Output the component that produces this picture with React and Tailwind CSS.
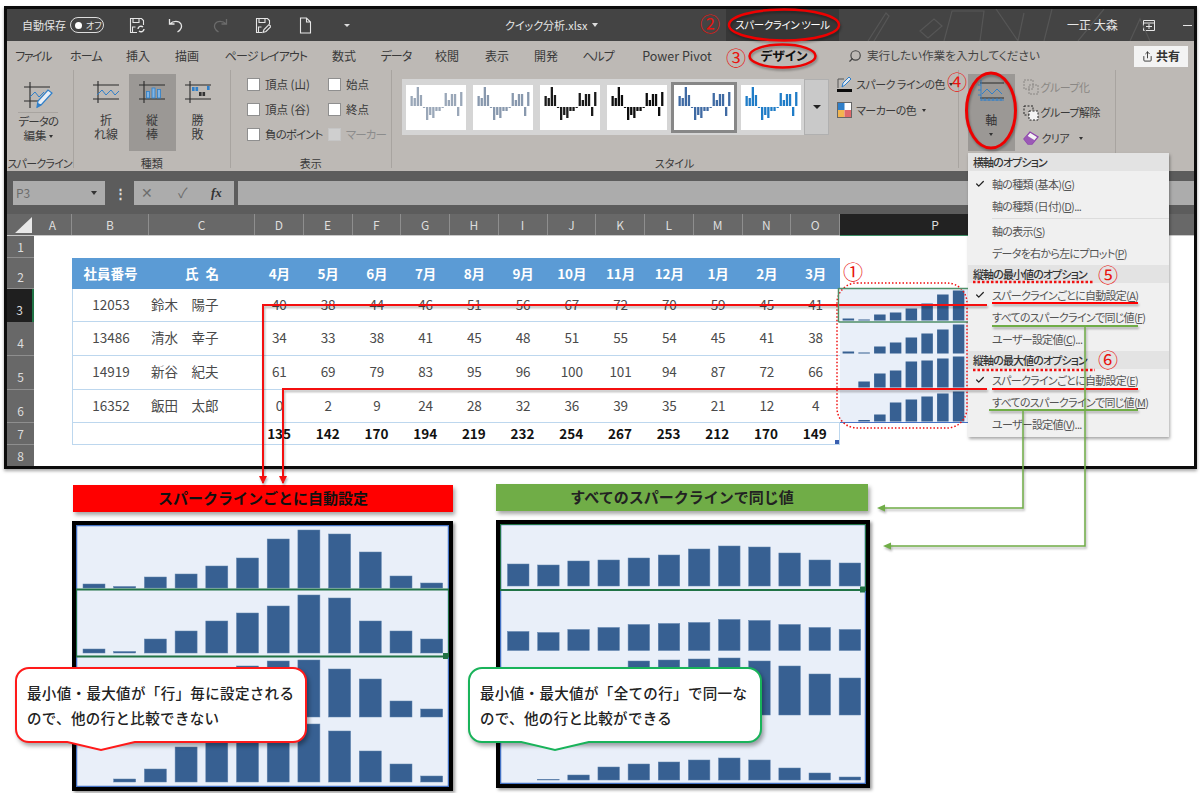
import React from 'react';
import { Check, Search, Share } from 'lucide-react';

const cols = ['D', 'E', 'F', 'G', 'H', 'I', 'J', 'K', 'L', 'M', 'N', 'O'];
const months = ['4月', '5月', '6月', '7月', '8月', '9月', '10月', '11月', '12月', '1月', '2月', '3月'];
const rows = [
  { id: 12053, name: '鈴木　陽子', h: 'h-[33px]', vals: [40, 38, 44, 46, 51, 56, 67, 72, 70, 59, 45, 41], spark: [2, 1, 6, 8, 12, 17, 26, 30] },
  { id: 13486, name: '清水　幸子', h: 'h-[34px]', vals: [34, 33, 38, 41, 45, 48, 51, 55, 54, 45, 41, 38], spark: [2, 1, 7, 11, 16, 20, 24, 29] },
  { id: 14919, name: '新谷　紀夫', h: 'h-[34px]', vals: [61, 69, 79, 83, 95, 96, 100, 101, 94, 87, 72, 66], spark: [0, 6, 14, 17, 26, 27, 29, 31] },
  { id: 16352, name: '飯田　太郎', h: 'h-[33px]', vals: [0, 2, 9, 24, 28, 32, 36, 39, 35, 21, 12, 4], spark: [0, 1.5, 7, 19, 22, 25, 28, 30] },
];
const totals = [135, 142, 170, 194, 219, 232, 254, 267, 253, 212, 170, 149];

const autoChart = [
  { base: 63, bars: [4, 1.5, 11, 14, 22, 30, 49, 58, 54, 36, 12, 5] },
  { base: 128, bars: [4, 1.5, 14, 22, 32, 40, 47, 58, 55, 32, 22, 14] },
  { base: 192, bars: [2, 12, 25, 31, 47, 51, 56, 57, 48, 38, 16, 8] },
  { base: 257, bars: [0, 3, 13, 35, 41, 47, 53, 58, 51, 31, 18, 6] },
];
const sameChart = [
  { base: 62, bars: [22, 21, 25, 26, 28, 31, 37, 40, 39, 33, 26, 23] },
  { base: 126.5, bars: [19, 18, 21, 23, 26, 27, 28, 31, 30, 26, 23, 21] },
  { base: 191, bars: [34, 39, 45, 47, 54, 55, 56, 57, 54, 49, 41, 37] },
  { base: 256, bars: [0, 0.7, 5, 13, 16, 18, 20, 22, 20, 12, 7, 3] },
];

function Spark({ bars }) {
  return (
    <svg width="128" height="100%" className="block h-full">
      {bars.map((h, i) => (
        <rect key={i} x={2.6 + i * 15.75} y={31.5 - h} width="11.5" height={h} fill="#376092" />
      ))}
    </svg>
  );
}

function BigChart({ data, step, barW, startX, width, height, children }) {
  return (
    <svg width={width} height={height} className="block">
      {data.map((row, r) =>
        row.bars.map((h, i) => (
          <rect key={r + '-' + i} x={startX + i * step} y={row.base - h} width={barW} height={h} fill="#376092" stroke="#5f82ad" strokeWidth="0.5" />
        ))
      )}
      {children}
    </svg>
  );
}

function GalleryIcon({ color }) {
  const up = [10, 8, 19, 11, 0, 0, 0, 0, 0, 0, 0, 13, 6, 12, 12, 0, 14];
  const down = [0, 0, 0, 0, 1, 13, 8, 11, 4, 4, 1, 0, 0, 0, 0, 9, 0];
  return (
    <svg width="60" height="45" className="block">
      {up.map((h, i) => (
        <rect key={i} x={4.5 + i * 3.1} y={21 - h} width="2.3" height={h} fill={color} />
      ))}
      {down.map((h, i) => (
        <rect key={'d' + i} x={4.5 + i * 3.1} y={22} width="2.3" height={h} fill={color} />
      ))}
    </svg>
  );
}

function TypeIcon({ kind }) {
  return (
    <svg width="28" height="24" viewBox="0 0 28 24" fill="none" className="block">
      <path d="M1 5h26M1 19h26M6 1v22" stroke="#2b2b2b" strokeWidth="1.1" />
      {kind === 'line' && <path d="M5 15l5-5 4 5 5-5 4 5 4-4" stroke="#2f7fc9" strokeWidth="1" />}
      {kind === 'bar' && (
        <g fill="#7fb4e6" stroke="#2f7fc9" strokeWidth="0.8">
          <rect x="8.5" y="11.5" width="3" height="6.5" />
          <rect x="14" y="8" width="3" height="10" />
          <rect x="19.5" y="9.5" width="3" height="8.5" />
        </g>
      )}
      {kind === 'win' && (
        <g strokeWidth="0.5">
          <rect x="8" y="7" width="2.6" height="4" fill="#2f7fc9" />
          <rect x="11.5" y="7" width="2.6" height="4" fill="#2f7fc9" />
          <rect x="15" y="12" width="2.6" height="4" fill="#333" />
          <rect x="18.5" y="12" width="2.6" height="4" fill="#333" />
          <rect x="23" y="6" width="2.6" height="4" fill="#2f7fc9" />
        </g>
      )}
    </svg>
  );
}

function TypeButton({ kind, top, bottom, width, active }) {
  return (
    <div className={`flex h-[77px] flex-col items-center pt-[6px] ${width} ${active ? 'bg-[#9b9895]' : ''}`}>
      <TypeIcon kind={kind} />
      <div className="mt-[9px] text-center text-[12px] leading-[14px] text-[#3a3a3a]">
        <div>{top}</div>
        <div>{bottom}</div>
      </div>
    </div>
  );
}

function Caret({ className = '' }) {
  return <span className={`inline-block h-0 w-0 border-x-[2.5px] border-t-[3px] border-x-transparent border-t-[#333] align-middle ${className}`} />;
}

function Box({ label, disabled, tight }) {
  return (
    <div className="flex h-[25px] items-center">
      <span className={`h-[13px] w-[13px] shrink-0 border ${disabled ? 'border-[#c5c5c5] bg-[#cfcfcf]' : 'border-[#8f8f8f] bg-white'}`} />
      <span className={`ml-[5px] whitespace-nowrap text-[11.5px] ${tight ? 'tracking-[-0.9px]' : ''} ${disabled ? 'text-[#8c8c8c]' : 'text-[#3a3a3a]'}`}>{label}</span>
    </div>
  );
}

function GroupLabel({ children, className = '' }) {
  return <div className={`absolute inset-x-0 -bottom-[3px] h-[16px] whitespace-nowrap text-center text-[11px] leading-[16px] text-[#3a3a3a] ${className}`}>{children}</div>;
}

function MenuHead({ children }) {
  return <div className="flex h-[18px] items-center bg-[#e3e3e3] pl-[5px] text-[11px] font-medium tracking-[-0.9px] text-[#333]">{children}</div>;
}

function MenuItem({ children, checked }) {
  return (
    <div className="relative flex h-[22px] items-center whitespace-nowrap pl-[24px] text-[11px] tracking-[-0.7px] text-[#555]">
      {checked && <Check size={10} strokeWidth={3} className="absolute left-[7px] top-[6px] text-[#222]" />}
      <span>{children}</span>
    </div>
  );
}

function Circled({ children, className }) {
  return <span className={`absolute text-[20px] leading-none text-[#e8140f] ${className}`}>{children}</span>;
}

function Callout({ color, tail, className, children }) {
  return (
    <div className={`absolute top-[667px] h-[76px] whitespace-nowrap rounded-[14px] border-2 bg-white px-[10px] pt-[11px] text-[14.5px] font-medium leading-[25px] tracking-[0.35px] text-[#222] shadow-[2px_3px_4px_rgba(0,0,0,0.35)] [font-feature-settings:normal] ${className}`}>
      {children}
      <svg width="80" height="11" className={`absolute top-[72px] ${tail}`}>
        <path d="M0 0L38 9L76 0" fill="#fff" stroke={color} strokeWidth="2" />
      </svg>
    </div>
  );
}

export default function App() {
  return (
    <div className="relative h-[793px] w-[1200px] overflow-hidden bg-white font-['Noto_Sans_CJK_JP','Noto_Sans',sans-serif] [font-feature-settings:'palt']">
      {/* excel window */}
      <div className="ml-[4px] mt-[6px] w-[1193px] border-[3px] border-[#0c0c0c] shadow-[0_2px_3px_rgba(0,0,0,0.35)]">
        {/* title bar */}
        <div className="relative flex h-[32px] items-center overflow-hidden bg-[#444444] pl-[15px] text-[11px] text-[#e6e6e6]">
          <svg width="300" height="32" className="absolute left-[853px] top-0" fill="none" stroke="#565656" strokeWidth="1.2">
            <path d="M8 32L26 4l3 3L14 32M60 22l14-12 8 7-14 12zM84 32l8-30h32l-4 30M136 0l22 32M164 4l-6 28M192 0l-8 32M218 32l26-32M270 32l10-22 10 22" />
          </svg>
          <span className="w-[44px] whitespace-nowrap">自動保存</span>
          <div className="ml-[4px] flex h-[16px] w-[34px] items-center rounded-full border border-[#ddd] pl-[4px]">
            <span className="h-[7px] w-[7px] rounded-full bg-white" />
            <span className="ml-[4px] text-[9px] leading-none">オフ</span>
          </div>
          <svg width="16" height="17" viewBox="0 0 16 17" fill="none" stroke="#e6e6e6" strokeWidth="1.1" className="ml-[25px] shrink-0">
            <path d="M8 15.5H1.5v-14h11l2 2V8M4 1.5v4h6v-4M3.5 15v-5h3" />
            <path d="M9 12a3 3 0 0 1 5-2M15 12a3 3 0 0 1-5 2" strokeWidth="1.4" />
          </svg>
          <svg width="16" height="17" viewBox="0 0 16 17" fill="none" stroke="#e6e6e6" strokeWidth="1.3" className="ml-[23px] shrink-0">
            <path d="M1.5 2v5h5M2 7c3-3.5 9-3.5 11 0 1.5 3-.5 6-3.5 8" />
          </svg>
          <svg width="16" height="17" viewBox="0 0 16 17" fill="none" stroke="#6b6b6b" strokeWidth="1.3" className="ml-[28px] shrink-0">
            <path d="M14.5 2v5h-5M14 7c-3-3.5-9-3.5-11 0-1.5 3 .5 6 3.5 8" />
          </svg>
          <svg width="16" height="17" viewBox="0 0 16 17" fill="none" stroke="#e6e6e6" strokeWidth="1.1" className="ml-[27px] shrink-0">
            <path d="M7 15.5H1.5v-14h11l2 2V7M4 1.5v4h6v-4M3.5 15v-5h3" />
            <path d="M8 15.5l1-3 5-5 2 2-5 5z" />
          </svg>
          <svg width="13" height="17" viewBox="0 0 13 17" fill="none" stroke="#e6e6e6" strokeWidth="1.1" className="ml-[28px] shrink-0">
            <path d="M1.5 1h6l4 4v11h-10zM7.5 1v4h4" />
          </svg>
          <span className="ml-[32px] h-0 w-0 shrink-0 border-x-[3px] border-t-[3px] border-x-transparent border-t-[#ddd]" />
          <span className="ml-[155px] flex w-[88px] items-center whitespace-nowrap text-[11px]">
            クイック分析.xlsx
            <span className="ml-[5px] h-0 w-0 border-x-[3.5px] border-t-[4px] border-x-transparent border-t-[#ddd]" />
          </span>
          <div className="ml-[133px] flex h-full w-[113px] shrink-0 items-center justify-center whitespace-nowrap bg-[#373737] text-[10.5px] tracking-[-0.4px] text-white">スパークライン ツール</div>
          <span className="ml-[228px] w-[47px] whitespace-nowrap text-[12px]">一正 大森</span>
          <svg width="12" height="11" viewBox="0 0 12 11" fill="none" stroke="#e6e6e6" className="ml-[29px] shrink-0">
            <path d="M.5.5h11v10H.5zM.5 3h11M3 6.500h6M6 4v5" />
          </svg>
          <span className="ml-[28px] h-px w-[9px] bg-[#e6e6e6]" />
        </div>

        {/* tabs */}
        <div className="flex h-[29px] items-center bg-[#bdb9b5] pt-[1px] text-center text-[12px] text-[#3a3a3a]">
          <span className="w-[52px] tracking-[-1.5px]">ファイル</span>
          <span className="w-[54px] tracking-[-0.8px]">ホーム</span>
          <span className="w-[50px]">挿入</span>
          <span className="w-[48px]">描画</span>
          <span className="w-[110px] tracking-[-0.9px]">ページ レイアウト</span>
          <span className="w-[46px]">数式</span>
          <span className="w-[58px] tracking-[-1px]">データ</span>
          <span className="w-[44px]">校閲</span>
          <span className="w-[56px]">表示</span>
          <span className="w-[42px]">開発</span>
          <span className="w-[62px] tracking-[-1px]">ヘルプ</span>
          <span className="w-[96px] text-[12.5px]">Power Pivot</span>
          <span className="w-[118px] text-[12.5px] font-bold text-[#111]">デザイン</span>
          <Search size={14} className="ml-[5px] -scale-x-100 text-[#444]" />
          <span className="ml-[5px] text-[11.6px] text-[#444]">実行したい作業を入力してください</span>
          <div className="ml-auto mr-[6px] flex h-[21px] w-[54px] items-center justify-center bg-[#f3f3f3] text-[12px] font-bold text-[#333]">
            <Share size={11} className="mr-[3px]" />
            共有
          </div>
        </div>

        {/* ribbon */}
        <div className="flex h-[101px] bg-[#bdb9b5]">
          <div className="relative flex h-[98px] w-[66.5px] flex-col items-center border-r border-[#a8a4a0] pr-[3px] pt-[11px]">
            <svg width="30" height="28" viewBox="0 0 30 28" fill="none" className="block">
              <path d="M1 6h26M1 20h20M7 1v26" stroke="#2b2b2b" strokeWidth="1.1" />
              <path d="M7 16l5-5 4 5 5-5" stroke="#2f7fc9" strokeWidth="1" />
              <path d="M14 26l1-6 10-11 4 3-10 11z" fill="#e8eef5" stroke="#2f7fc9" strokeWidth="1.2" />
              <path d="M14 27l1-5 4 2z" fill="#2f7fc9" />
            </svg>
            <div className="mt-[3px] h-px w-[40px] bg-[#a8a4a0]" />
            <div className="mt-[1px] text-center text-[11.5px] leading-[14px] text-[#3a3a3a]">
              <div className="tracking-[-0.9px]">データの</div>
              <div>編集 <Caret /></div>
            </div>
            <GroupLabel className="text-[10.5px] tracking-[-0.8px]">スパークライン</GroupLabel>
          </div>
          <div className="relative flex h-[98px] w-[157.5px] border-r border-[#a8a4a0] pl-[10px] pt-[4px]">
            <TypeButton kind="line" top="折" bottom="れ線" width="w-[45px]" />
            <TypeButton kind="bar" top="縦" bottom="棒" width="w-[47px]" active />
            <TypeButton kind="win" top="勝" bottom="敗" width="w-[44px]" />
            <GroupLabel>種類</GroupLabel>
          </div>
          <div className="relative flex h-[98px] w-[160.5px] border-r border-[#a8a4a0] pl-[16px] pt-[2px]">
            <div className="w-[81px]">
              <Box label="頂点 (山)" />
              <Box label="頂点 (谷)" />
              <Box label="負のポイント" tight />
            </div>
            <div>
              <Box label="始点" />
              <Box label="終点" />
              <Box label="マーカー" disabled tight />
            </div>
            <GroupLabel>表示</GroupLabel>
          </div>
          <div className="relative flex h-[98px] w-[567px] border-r border-[#a8a4a0] pl-[10.5px]">
            <div className="mt-[9px] flex h-[56px] w-[427px] bg-[#d5d5d5] pl-[4px] pt-[6px]">
              <div className="flex gap-[7px]">
                <div className="h-[45px] w-[60px] bg-white"><GalleryIcon color="#9aa7b8" /></div>
                <div className="h-[45px] w-[60px] bg-white"><GalleryIcon color="#8898ad" /></div>
                <div className="h-[45px] w-[60px] bg-white"><GalleryIcon color="#1a1a1a" /></div>
                <div className="h-[45px] w-[60px] bg-white"><GalleryIcon color="#0d0d0d" /></div>
                <div className="h-[45px] w-[60px] bg-white ring-[3px] ring-[#878787]"><GalleryIcon color="#3f6aa3" /></div>
                <div className="h-[45px] w-[60px] bg-white"><GalleryIcon color="#1f7cc7" /></div>
              </div>
              <div className="-mt-[6px] ml-[3px] flex h-[56px] w-[26px] items-center justify-center border border-[#b0b0b0] bg-[#c9c9c9]">
                <span className="h-0 w-0 border-x-[4px] border-t-[4px] border-x-transparent border-t-[#222]" />
              </div>
            </div>
            <div className="ml-[8px] mt-[1px] whitespace-nowrap text-[11px] tracking-[-0.5px] text-[#3a3a3a]">
              <div className="flex h-[26px] items-center">
                <svg width="16" height="16" viewBox="0 0 16 16" fill="none" className="mr-[3px] shrink-0">
                  <path d="M1 12V3h6" stroke="#555" />
                  <path d="M5 11l1-4 6-6 2 2-6 6z" fill="#dfe8f2" stroke="#2f7fc9" />
                  <rect x="0" y="13" width="15" height="3" fill="#0b0b0b" />
                </svg>
                スパーク ラインの色
                <Caret className="ml-[4px]" />
              </div>
              <div className="flex h-[26px] items-center">
                <svg width="15" height="16" viewBox="0 0 15 16" className="mr-[4px] shrink-0">
                  <rect x="0.500" y="0.500" width="14" height="15" fill="#fff" stroke="#666" />
                  <rect x="1" y="1" width="6.500" height="7" fill="#2f7fc9" />
                  <rect x="1" y="8" width="6.500" height="7" fill="#f2b550" />
                  <rect x="7.500" y="8" width="6.500" height="7" fill="#e0686b" />
                </svg>
                マーカーの色
                <Caret className="ml-[6px]" />
              </div>
            </div>
            <GroupLabel>スタイル</GroupLabel>
          </div>
          <div className="relative flex h-[98px] w-[157px] border-r border-[#a8a4a0] pl-[9.5px] pt-[4px]">
            <div className="flex h-[77px] w-[46.500px] flex-col items-center bg-[#9b9895] pt-[6px] text-[12px] text-[#333]">
              <svg width="28" height="24" viewBox="0 0 28 24" fill="none" className="block">
                <path d="M3 3h24M3 18h24" stroke="#2b2b2b" strokeWidth="1.1" />
                <path d="M4 0v21M4 20h23M8 18v3M12 18v3M16 18v3M20 18v3M24 18v3M1 5h3M1 10h3M1 15h3" stroke="#2f7fc9" strokeWidth="0.9" />
                <path d="M5 14l5-5 5 5 5-5 5 5" stroke="#2f7fc9" strokeWidth="1" />
              </svg>
              <span className="mt-[9px] leading-[14px]">軸</span>
              <Caret className="mt-[6px]" />
            </div>
            <div className="ml-[8px] whitespace-nowrap text-[11px] tracking-[-0.5px] text-[#3a3a3a]">
              <div className="flex h-[26px] items-center text-[#8a8784]">
                <svg width="16" height="16" viewBox="0 0 16 16" fill="none" stroke="#8a8784" className="mr-[2px]">
                  <path d="M1 1h9v9H1zM6 6h9v9H6z" strokeDasharray="2 1" />
                </svg>
                グループ化
              </div>
              <div className="flex h-[25px] items-center">
                <svg width="16" height="16" viewBox="0 0 16 16" fill="none" stroke="#222" className="mr-[2px]">
                  <path d="M1 1h9v9H1z" strokeDasharray="2 1.500" />
                  <rect x="6" y="6" width="9" height="9" fill="#f3f3f3" strokeDasharray="2 1.500" />
                </svg>
                グループ解除
              </div>
              <div className="flex h-[26px] items-center">
                <svg width="16" height="14" viewBox="0 0 16 14" className="mr-[3px]">
                  <path d="M1 8l6-7 8 5-6 7H5z" fill="#f5f5f5" stroke="#8e44ad" strokeWidth="1.300" />
                  <path d="M1 8l3-3.500 8 5-3 3.500H5z" fill="#9b59b6" />
                </svg>
                クリア
                <Caret className="ml-[10px]" />
              </div>
            </div>
          </div>
        </div>

        {/* formula bar */}
        <div className="flex h-[43px] items-center bg-[#5c5c5c] pl-[6px] text-[#6c6c6c]">
          <div className="flex h-[24px] w-[92px] items-center justify-between bg-[#acacac] px-[3px] text-[12px]">
            P3
            <span className="mr-[5px] h-0 w-0 border-x-[3px] border-t-[4px] border-x-transparent border-t-[#333]" />
          </div>
          <span className="ml-[9px] w-[20px] text-[13px] font-bold text-[#ddd]">⋮</span>
          <div className="flex h-[24px] w-[100px] items-center bg-[#acacac] pl-[7px] text-[14px]">
            <span className="w-[37px]">✕</span>
            <span className="w-[33px]">✓</span>
            <span className="font-['Liberation_Serif',serif] text-[13px] font-bold italic text-[#333]">fx</span>
          </div>
          <div className="ml-[4px] h-[24px] flex-1 bg-[#acacac]" />
        </div>

        {/* column headers */}
        <div className="flex h-[22px] border-b border-[#c9c9c9] bg-[#686868] text-center text-[12px] leading-[22px] text-[#ddd]">
          <div className="w-[27px] pl-[5px] pt-[3px]">
            <svg width="20" height="16" className="block">
              <path d="M20 0V17H2z" fill="#e8e8e8" />
            </svg>
          </div>
          <div className="w-[38px] border-r border-[#8e8e8e]">A</div>
          <div className="w-[77px] border-r border-[#8e8e8e]">B</div>
          <div className="w-[106px] border-r border-[#8e8e8e]">C</div>
          {cols.map((c) => (
            <div key={c} className="w-[48.75px] border-r border-[#8e8e8e]">{c}</div>
          ))}
          <div className="h-[22px] w-[190px] border-b border-[#3f8f68] bg-[#222222]">P</div>
        </div>

        {/* sheet */}
        <div className="flex h-[230px]">
          <div className="w-[27px] bg-[#686868] text-center text-[12px] text-[#ddd]">
            <div className="h-[22px] border-b border-[#8e8e8e] leading-[22px]">1</div>
            <div className="h-[31px] border-b border-[#8e8e8e] pt-[7px] leading-[24px]">2</div>
            <div className="h-[33px] border-r-2 border-[#217346] bg-[#1f1f1f] pt-[9px] leading-[24px]">3</div>
            <div className="h-[34px] border-b border-[#8e8e8e] pt-[9px] leading-[24px]">4</div>
            <div className="h-[34px] border-b border-[#8e8e8e] pt-[9px] leading-[24px]">5</div>
            <div className="h-[33px] border-b border-[#8e8e8e] pt-[9px] leading-[24px]">6</div>
            <div className="h-[22px] border-b border-[#8e8e8e] leading-[22px]">7</div>
            <div className="h-[21px] leading-[21px]">8</div>
          </div>
          <div className="flex-1 bg-white pl-[38px] pt-[22px] text-center text-[13.500px] text-[#4a4a4a]">
            <div className="flex h-[31px] w-[768px] items-center bg-[#5b9bd5] pb-[1px] font-bold text-white">
              <span className="w-[77px]">社員番号</span>
              <span className="w-[106px] [word-spacing:4px]">氏 名</span>
              {months.map((m) => (
                <span key={m} className="w-[48.750px]">{m}</span>
              ))}
            </div>
            {rows.map((r, i) => (
              <div key={r.id} className="flex">
                <div className={`flex w-[768px] items-center border-b-[1.500px] border-l border-[#bdd7ee] pb-[2px] ${r.h}`}>
                  <span className="w-[76px]">{r.id}</span>
                  <span className="w-[106px] pl-[2px] text-left">{r.name}</span>
                  {r.vals.map((v, j) => (
                    <span key={j} className="w-[48.750px]">{v}</span>
                  ))}
                </div>
                <div className={`w-[128px] bg-[#e9eff9] ${r.h} ${i === 3 ? 'border-b border-[#4472c4]' : ''}`}>
                  <Spark bars={r.spark} />
                </div>
              </div>
            ))}
            <div className="relative flex h-[22px] w-[768px] items-center border-x border-b-[1.500px] border-[#bdd7ee] font-bold text-[#111]">
              <span className="w-[182px]" />
              {totals.map((v) => (
                <span key={v} className="w-[48.750px]">{v}</span>
              ))}
              <span className="absolute bottom-0 right-0 h-[4px] w-[4px] bg-[#3a5fb0]" />
            </div>
          </div>
        </div>
      </div>

      {/* bottom panels */}
      <div className="flex">
        <div className="ml-[73px] mt-[16px] w-[380px]">
          <div className="flex h-[27px] items-center justify-center bg-[#ff0000] text-[15px] font-bold text-[#111] shadow-[2px_3px_4px_rgba(0,0,0,0.35)] [font-feature-settings:normal]">スパークラインごとに自動設定</div>
          <div className="-ml-[1px] mt-[9px] h-[270px] w-[381px] border-[4px] border-black bg-[#e9eff9] shadow-[2px_2px_3px_rgba(0,0,0,0.4)]">
            <BigChart data={autoChart} step={30.7} barW={22} startX={7} width={373} height={262}>
              <rect x="0.500" y="0.500" width="372" height="261" fill="none" stroke="#4472c4" strokeWidth="1.500" />
              <rect x="0.500" y="64.500" width="372" height="67" fill="none" stroke="#217346" strokeWidth="1" />
              <path d="M0 64.500H373M0 131.500H373" stroke="#217346" strokeWidth="2" />
              <rect x="367" y="128" width="5" height="6" fill="#217346" />
            </BigChart>
          </div>
        </div>
        <div className="ml-[43px] mt-[15px] w-[372px]">
          <div className="flex h-[27px] items-center justify-center bg-[#70ad47] text-[15px] font-bold text-[#222] shadow-[2px_3px_4px_rgba(0,0,0,0.35)] [font-feature-settings:normal]">すべてのスパークラインで同じ値</div>
          <div className="mt-[9px] h-[268px] w-[374px] border-[4px] border-black bg-[#e9eff9] shadow-[2px_2px_3px_rgba(0,0,0,0.4)]">
            <BigChart data={sameChart} step={30.15} barW={21.5} startX={7.500} width={366} height={260}>
              <rect x="0.500" y="0.500" width="365" height="259" fill="none" stroke="#4472c4" strokeWidth="1.500" />
              <path d="M0.500 66V0.500H365.500V66" fill="none" stroke="#217346" strokeWidth="1.200" />
              <path d="M0 66H366" stroke="#217346" strokeWidth="2" />
              <rect x="360" y="62.500" width="5" height="6" fill="#217346" />
            </BigChart>
          </div>
        </div>
      </div>

      {/* axis menu */}
      <div className="absolute left-[968px] top-[153px] h-[284px] w-[201px] bg-[#f0f0f0] shadow-[1px_2px_3px_rgba(0,0,0,0.35)]">
        <MenuHead>横軸のオプション</MenuHead>
        <div className="h-[2px]" />
        <MenuItem checked>軸の種類 (基本)(<u>G</u>)</MenuItem>
        <MenuItem>軸の種類 (日付)(<u>D</u>)...</MenuItem>
        <div className="ml-[24px] mt-[1px] h-px bg-[#dcdcdc]" />
        <div className="h-px" />
        <MenuItem>軸の表示(<u>S</u>)</MenuItem>
        <MenuItem>データを右から左にプロット(<u>P</u>)</MenuItem>
        <div className="h-px" />
        <MenuHead>縦軸の最小値のオプション</MenuHead>
        <div className="h-px" />
        <MenuItem checked>スパークラインごとに自動設定(<u>A</u>)</MenuItem>
        <MenuItem>すべてのスパークラインで同じ値(<u>F</u>)</MenuItem>
        <MenuItem>ユーザー設定値(<u>C</u>)...</MenuItem>
        <div className="h-px" />
        <MenuHead>縦軸の最大値のオプション</MenuHead>
        <MenuItem checked>スパークラインごとに自動設定(<u>E</u>)</MenuItem>
        <MenuItem>すべてのスパークラインで同じ値(<u>M</u>)</MenuItem>
        <MenuItem>ユーザー設定値(<u>V</u>)...</MenuItem>
      </div>

      {/* callouts */}
      <Callout color="#ff1a1a" tail="left-[46px]" className="left-[15px] w-[292px] border-[#ff1a1a]">
        <div>最小値・最大値が「行」毎に設定される</div>
        <div>ので、他の行と比較できない</div>
      </Callout>
      <Callout color="#19b35a" tail="left-[47px]" className="left-[468px] w-[294px] border-[#19b35a]">
        <div>最小値・最大値が「全ての行」で同一な</div>
        <div>ので、他の行と比較ができる</div>
      </Callout>

      {/* annotation strokes */}
      <svg width="1200" height="793" fill="none" className="pointer-events-none absolute left-0 top-0">
        <g className="drop-shadow-[1px_2px_1px_rgba(0,0,0,0.3)]">
          <path d="M263 483V305H987M283 483V389H987" stroke="#f40f0f" strokeWidth="2" />
          <path d="M263 484l-4-8h8zM283 484l-4-8h8z" fill="#f40f0f" />
          <path d="M992 303H1138M992 389H1138" stroke="#f00" strokeWidth="2.200" />
          <path d="M992 326H1138M989 410H1138" stroke="#70ad47" strokeWidth="2.200" />
          <path d="M1023 410V508H880M1085 326V546H886" stroke="#70ad47" strokeWidth="1.500" />
          <path d="M877 508l8-3.500v7zM883 546l8-3.500v7z" fill="#70ad47" />
          <ellipse cx="784" cy="25" rx="55" ry="15.500" stroke="#ee0000" strokeWidth="2.500" />
          <ellipse cx="782.500" cy="56" rx="33" ry="11.500" stroke="#ee0000" strokeWidth="2.500" />
          <ellipse cx="991" cy="110.500" rx="24.500" ry="37.500" stroke="#ee0000" strokeWidth="3" />
        </g>
        <rect x="837" y="283" width="130" height="145" rx="20" stroke="#f01010" strokeWidth="1.500" strokeDasharray="1.500 2" />
        <path d="M973 282H1094M973 370H1095" stroke="#f01010" strokeWidth="2.500" strokeDasharray="2.500 2" />
        <path d="M838.500 288.500H968M838.500 322H968M838.500 288V322" stroke="#4f8f68" strokeWidth="1.500" />
      </svg>

      <Circled className="left-[700px] top-[14px]">②</Circled>
      <Circled className="left-[726px] top-[48px]">③</Circled>
      <Circled className="left-[947px] top-[72px]">④</Circled>
      <Circled className="left-[843px] top-[262px]">①</Circled>
      <Circled className="left-[1098px] top-[265px]">⑤</Circled>
      <Circled className="left-[1098px] top-[350px]">⑥</Circled>
    </div>
  );
}
